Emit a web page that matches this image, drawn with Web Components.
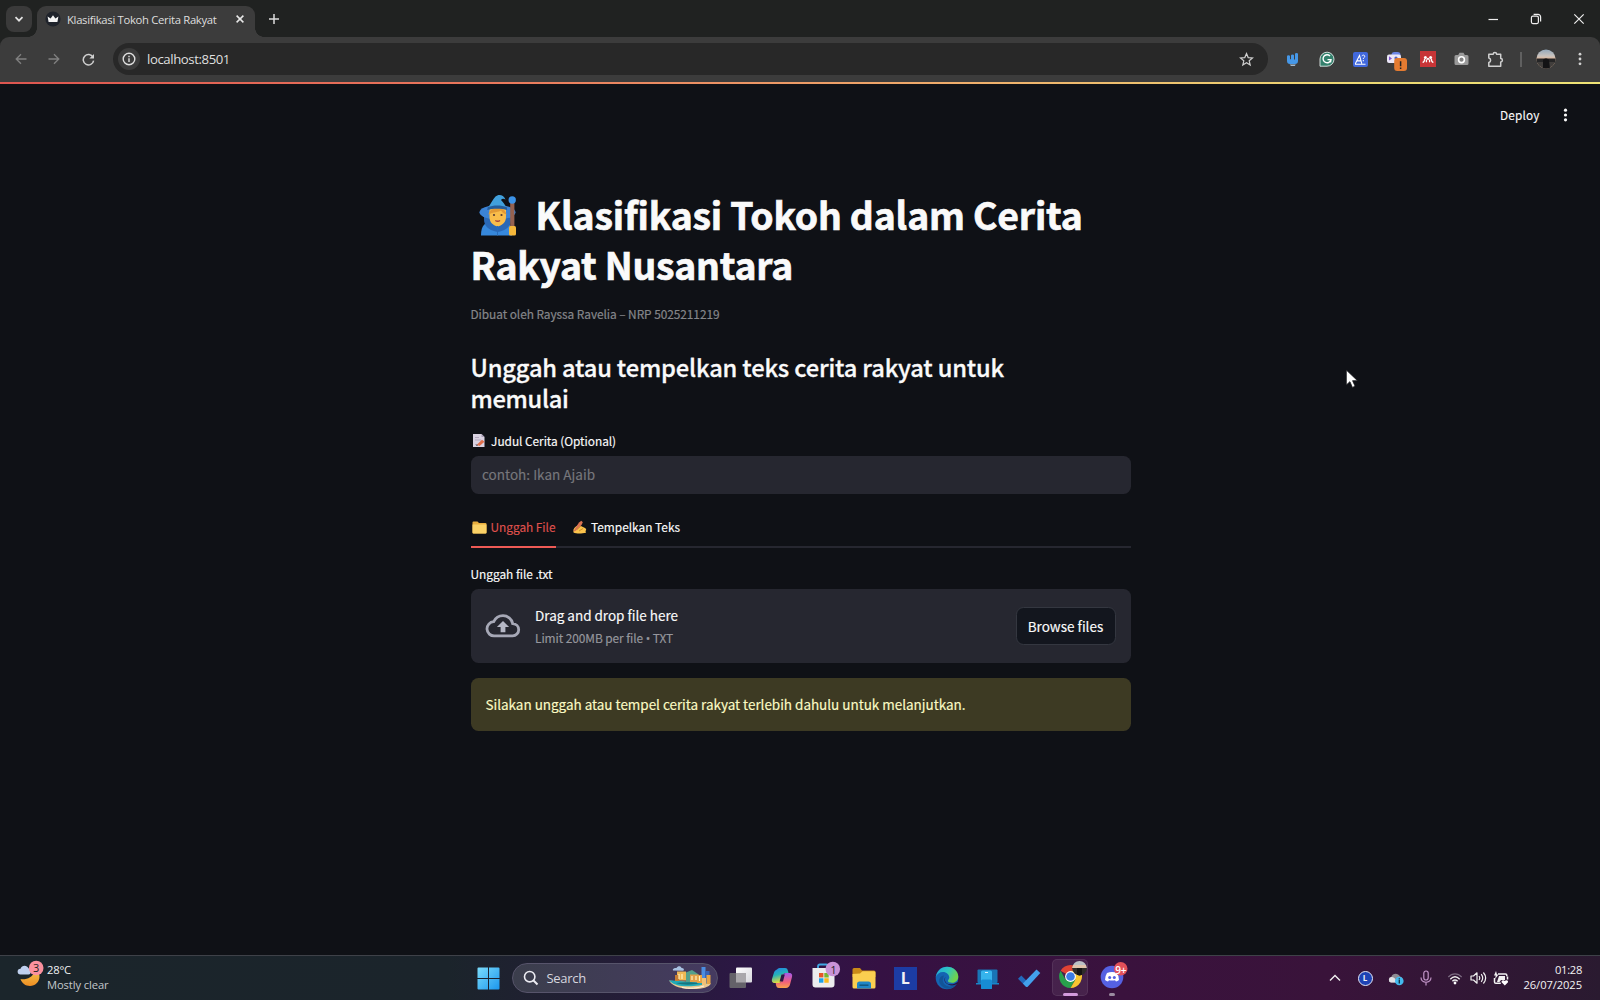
<!DOCTYPE html>
<html lang="id">
<head>
<meta charset="utf-8">
<title>Klasifikasi Tokoh Cerita Rakyat</title>
<style>
html,body{margin:0;height:100%;background:#0f1116;overflow:hidden}
</style>
</head>
<body>
<desktop-screen></desktop-screen>
<script>
const SANS = '"Noto Sans CJK SC","Open Sans",sans-serif';
const UI = '"Open Sans","Noto Sans",sans-serif';

/* name: [width, height, viewBox, markup] */
const ICONS = {
  chevDown:[12,12,'0 0 12 12','<path d="M2.5 4.2 6 7.7 9.5 4.2" fill="none" stroke="#e3e3e3" stroke-width="1.7"/>'],
  crown:[16,16,'0 0 16 16','<circle cx="8" cy="8" r="7.6" fill="#1f232b"/><path d="M2.6 5.4 5.6 7.4 8 4.2l2.4 3.2 3-2-1 5.6H3.6z" fill="#f4f4f4"/>'],
  x:[10,10,'0 0 10 10','<path d="M1.6 1.6l6.8 6.8M8.4 1.6 1.6 8.4" stroke="#e8e8e8" stroke-width="1.5"/>'],
  plus:[12,12,'0 0 12 12','<path d="M6 1v10M1 6h10" stroke="#dcdcdc" stroke-width="1.5"/>'],
  min:[12,12,'0 0 12 12','<path d="M1.5 6.5h9.5" stroke="#eee" stroke-width="1.2"/>'],
  restore:[12,12,'0 0 12 12','<rect x="1.4" y="3.2" width="7" height="7.4" rx="1.5" fill="none" stroke="#eee" stroke-width="1.2"/><path d="M3.6 1.4h4.4a2.6 2.6 0 0 1 2.6 2.6v4.6" fill="none" stroke="#eee" stroke-width="1.2"/>'],
  close:[12,12,'0 0 12 12','<path d="M1.3 1.3l9.4 9.4M10.7 1.3 1.3 10.7" stroke="#eee" stroke-width="1.2"/>'],
  back:[12,12,'0 0 12 12','<path d="M11.5 6H1.3M6 1.2 1.2 6 6 10.8" fill="none" stroke="#808080" stroke-width="1.3"/>'],
  fwd:[12,12,'0 0 12 12','<path d="M.5 6h10.2M6 1.2 10.8 6 6 10.8" fill="none" stroke="#808080" stroke-width="1.3"/>'],
  reload:[13,13,'0 0 13 13','<path d="M11 4.2A5.2 5.2 0 1 0 11.6 7.6" fill="none" stroke="#d0d0d0" stroke-width="1.5"/><path d="M12 .9v4.6H7.4z" fill="#d0d0d0"/>'],
  info:[14,14,'0 0 14 14','<circle cx="7" cy="7" r="5.8" fill="none" stroke="#dedede" stroke-width="1.4"/><path d="M7 6.2v3.9M7 3.8v1.4" stroke="#dedede" stroke-width="1.4"/>'],
  star:[15,15,'0 0 15 15','<path d="M7.5 1.6 9.2 5.6l4.3.4-3.3 2.8 1 4.2-3.7-2.2L3.8 13l1-4.2L1.5 6l4.3-.4z" fill="none" stroke="#cfcfcf" stroke-width="1.2"/>'],
  hand:[14,15,'0 0 14 15','<path d="M1 4.2q0-1 1.500-1t1.500 1v3h1V3.500q0-1 1.500-1t1.500 1v3.900h1V2q0-1 1.500-1t1.500 1v7q0 3-3 3H4q-3 0-3-3z" fill="#4698e8"/><path d="M3.600 12.600h6.200l-1 1.400H5z" fill="#a5bacd"/>'],
  grammarly:[16,16,'0 0 16 16','<path d="M1 15.2V8A7 7 0 1 1 8 15.2z" fill="#33806c" stroke="#dfe9e6" stroke-width=".9"/><path d="M11 5A4 4 0 1 0 12 8.6H8.5M12 8.4l-.5 3" fill="none" stroke="#fff" stroke-width="1.4"/>'],
  aq:[15,15,'0 0 15 15','<rect width="15" height="15" rx="2" fill="#4168dc"/><path d="M2.3 11.7 6.5 3.4l2.3 8.3M4 8.9h4.3M2 12.2h10.5" fill="none" stroke="#fff" stroke-width="1.1"/><path d="M9 4.2c.3-1.7 3-1.3 2.7.4-.2.9-1.4 1-1.4 2.4M10.3 8v1.3" fill="none" stroke="#fff"/>'],
  robot:[22,22,'0 0 22 22','<rect x="5.5" y="2" width="9" height="6" rx="3" fill="#6c86e6"/><rect x="1" y="4.5" width="14" height="8.5" rx="2" fill="#ebe7f7"/><path d="M3 6.3 6 8.4 3 10.5z" fill="#8157d2"/><circle cx="10" cy="8" r="1.6" fill="#5162bf"/><rect x="8.2" y="8" width="12.8" height="13" rx="3" fill="#e47b31"/><path d="M14.6 11.2v5M14.6 17.4v1.6" stroke="#222" stroke-width="1.5"/>'],
  mendeley:[16,16,'0 0 16 16','<rect width="16" height="16" fill="#c73537"/><g fill="none" stroke="#fff" stroke-width="1.300"><path d="M2.600 11.400c1.600-.2 2-1.600 2-3.400M13.400 11.400c-1.600-.2-2-1.600-2-3.400M6.300 11.200c.3-.8.3-1.600 0-2.700M9.700 11.200c-.3-.8-.3-1.600 0-2.700"/></g><g fill="#fff"><circle cx="5.400" cy="6.400" r="1.500"/><circle cx="10.600" cy="6.400" r="1.500"/><circle cx="8" cy="7.900" r="1.100"/></g>'],
  camera:[15,14,'0 0 15 14','<path d="M2 3h2.2L5.5.8h4L10.8 3H13a1.5 1.5 0 0 1 1.5 1.5v7A1.5 1.5 0 0 1 13 13H2A1.5 1.5 0 0 1 .5 11.500V4.500A1.500 1.500 0 0 1 2 3z" fill="#9a9a9a"/><circle cx="7.500" cy="7.700" r="2.900" fill="#808080" stroke="#fff" stroke-width="1.600"/>'],
  puzzle:[17,17,'0 0 17 17','<path d="M1.800 3.200h4.400a1.700 1.700 0 0 1 3.400 0h4.100v4.300a1.700 1.700 0 0 1 0 3.400v4.300H1.800v-3.700a2.300 2.300 0 0 0 0-4.500z" fill="none" stroke="#d0d0d0" stroke-width="1.500" stroke-linejoin="round"/>'],
  avatar:[20,20,'0 0 20 20','<defs><clipPath id="c"><circle cx="10" cy="10" r="9.600"/></clipPath><linearGradient id="s" x2="0" y2="1"><stop offset="0" stop-color="#8fa6bb"/><stop offset=".35" stop-color="#c9c3be"/><stop offset=".5" stop-color="#e0b79a"/></linearGradient></defs><g clip-path="url(#c)"><rect width="20" height="20" fill="url(#s)"/><path d="M0 9.500h20V14H0z" fill="#252526"/><path d="M0 13h20v7H0z" fill="#413e3c"/><path d="M7 11c1-2 5-2 6 0l1 9H7z" fill="#131315"/></g>'],
  dots:[4,16,'0 0 4 16','<g fill="#d2d2d2"><circle cx="2" cy="3.200" r="1.400"/><circle cx="2" cy="8" r="1.400"/><circle cx="2" cy="12.800" r="1.400"/></g>'],
  dotsApp:[5,16,'0 0 5 16','<g fill="#fafafa"><circle cx="2.500" cy="3.200" r="1.600"/><circle cx="2.500" cy="8" r="1.600"/><circle cx="2.500" cy="12.800" r="1.600"/></g>'],
  mage:[39,42,'0 0 39 42','<path d="M2 41.500C2 31 6 27 18.500 27S33 31 33 41.500z" fill="#3688dc"/><path d="M5 17h27v8c0 6-3 11-13.500 13C8 36 5 31 5 25z" fill="#2a68b6"/><ellipse cx="18.500" cy="18.300" rx="18" ry="7.200" fill="#3b83d6"/><path d="M10.500 15.500c2-3 14-3 16.500 0V23c0 5-3.500 8.500-8.300 9.500-5-1-8.200-4.500-8.200-9.500z" fill="#f9bd4b"/><path d="M9.500 20.500c1-5 5-6.500 9-6.500s8 1.500 9 6.500c-3-1-4.500-2-5.500-4-2 1.500-8 1.500-12.500 4z" fill="#e39a35"/><circle cx="15" cy="21" r="1.100" fill="#563b33"/><circle cx="22.500" cy="21" r="1.100" fill="#563b33"/><path d="M16.300 26.500q2.400 1.500 4.800 0" stroke="#a5403a" fill="none" stroke-width="1.300"/><path d="M9 14C12 9 14 5.500 16.500 2.500c2.500-2.500 8-2.500 10 3-2-1.200-3.500-1-4.500.5 2 2 4.500 5 5.500 8.500-5-2.200-13-2.200-18.500-.5z" fill="#41a0dc"/><path d="M8.800 13.200c5.500-2.300 13.500-2.300 19 0l.4 2.800c-6-1.800-14-1.800-20 0z" fill="#245d9b"/><path d="M18.500 32v9.500" stroke="#286cbb" stroke-width="1"/><rect x="31.200" y="8" width="4.200" height="26" fill="#95614f"/><circle cx="33.200" cy="6" r="3.700" fill="#3c93e8"/><rect x="30" y="32" width="7" height="9.500" rx="1.500" fill="#f5b73a"/>'],
  memo:[14,15,'0 0 14 15','<path d="M1 1h8.500l3 3v10H1z" fill="#d9d2e1"/><path d="M9.500 1v3h3z" fill="#a69bb3"/><path d="M3 4.500h4M3 7h6M3 11.500h5" stroke="#b3a8bf"/><path d="M4.800 11.800 10 6.700l2.500 2.100-5 4.200z" fill="#e0704c"/><path d="M4 13l.8-1.700 1.300 1.200z" fill="#444"/>'],
  folder:[15,13,'0 0 15 13','<path d="M.5 1.500A1 1 0 0 1 1.500.5h4L7 2h6.500a1 1 0 0 1 1 1v8.500a1 1 0 0 1-1 1h-12a1 1 0 0 1-1-1z" fill="#e8ae3e"/><path d="M.5 3.600h14v8a1 1 0 0 1-1 1h-12a1 1 0 0 1-1-1z" fill="#fbd267"/>'],
  write:[15,14,'0 0 15 14','<path d="M1.500 9.500C3 6.500 6 4.500 8 5.500l5 2.500c1.500.8 1.500 2 .5 3l.5 1.800-5 .6c-3 .2-6-.2-7.500-1z" fill="#fbc34c"/><path d="M1.200 11.500 7 2.500 9.300.7l1.500 1.500L9.500 5 3.500 11z" fill="#d97352"/><path d="M5 9.500l4-3.500M7 11l4-2.500" stroke="#c98c27" stroke-width=".9"/>'],
  cloudUp:[36,26,'0 0 36 26','<path d="M9.500 22.900a7.100 7.100 0 0 1-.8-14.200C10.500 5 14 2.700 18 2.700c4.700 0 8.700 3.300 9.700 7.900 3.400.2 6 2.900 6 6.100 0 3.400-2.700 6.200-6.100 6.200z" fill="none" stroke="#a6a8b6" stroke-width="2.800"/><path d="M15.600 19.300v-5.300h-3.700L18 8l6.100 6h-3.700v5.300z" fill="#b6b8c6"/>'],
  cursor:[15,20,'0 0 15 20','<path d="M1.300 1v15l3.600-3.300 2.500 5.700 2.700-1.200-2.500-5.500h4.900z" fill="#fff" stroke="#15171b" stroke-width=".8"/>'],
  weather:[28,28,'0 0 28 28','<defs><linearGradient id="m" x2="0" y2="1"><stop offset="0" stop-color="#f2c24b"/><stop offset="1" stop-color="#ef8d22"/></linearGradient></defs><path d="M3.500 19c5 1 12.500-1 14-8 2 0 5 1.500 5 5.500 0 5.500-4.500 9.500-9.500 9.500-4.500 0-8.300-2.800-9.500-7z" fill="url(#m)"/><path d="M3.500 14.500a2.900 2.900 0 0 1 0-5.800C4.500 5 10 4.500 11.500 8.300c3 .4 3.500 6.200 0 6.200z" fill="#bfd0ef"/><circle cx="19.200" cy="8" r="7.300" fill="#fb919e"/>'],
  win:[23,23,'0 0 23 23','<defs><linearGradient id="w" x2="1" y2="1"><stop offset="0" stop-color="#7bdcfb"/><stop offset="1" stop-color="#1b96ee"/></linearGradient></defs><path d="M1.500.5H11V11H.5V1.500a1 1 0 0 1 1-1zM12 .5h9.500a1 1 0 0 1 1 1V11H12zM.5 12H11v10.500H1.500a1 1 0 0 1-1-1zM12 12h10.500v9.500a1 1 0 0 1-1 1H12z" fill="url(#w)"/>'],
  search:[16,16,'0 0 16 16','<circle cx="6.700" cy="6.700" r="5.200" fill="none" stroke="#ececf2" stroke-width="1.600"/><path d="M10.500 10.500l4 4" stroke="#ececf2" stroke-width="1.900"/>'],
  city:[44,24,'0 0 44 24','<path d="M1 14.500c6 1 13 .5 20 1.500l22 1.500c-2 4-10 6-21 5.500C9 22.500 4 19 1 14.500z" fill="#e8c891"/><path d="M1 14.500c8-.5 15 1 20 1.500 8 .8 13 0 19 1.500-6 2-17 3.500-26 2.500-7-.8-10-3-13-5.500z" fill="#21aab6"/><path d="M8 17c8-1 17-1.500 23 .5-7 1.500-16 1.800-23-.5z" fill="#16757e"/><rect x="9" y="5.500" width="9" height="9" fill="#efb854"/><rect x="7" y="9" width="4" height="6" fill="#c67d34"/><path d="M18 6.500 24 4l6 4v8H18z" fill="#54a08b"/><rect x="22" y="8.500" width="9" height="7.500" fill="#e2a049"/><rect x="33.500" y="1" width="4" height="15" fill="#4b8de1"/><rect x="37" y="5" width="4.500" height="12" fill="#3664b9"/><path d="M29 9h5v8h-5zM38.500 9h4v9h-4z" fill="#e6a345"/><path d="M34 12h4v7h-4z" fill="#f0c277"/><path d="M11 8v5M14 8v5M24 10v4M28 10v4M31.500 10v5" stroke="#fff1bd" stroke-width="1.200"/><path d="M5 4.500C4 2.500 7 1.800 8.500 2 9.500-.3 13-.3 13.500 2c3-.3 3 2.800 1 2.800z" fill="#a9c2e2"/><path d="M14 21.500c7 1.500 16 .8 22-1.500" stroke="#fff2dc" fill="none"/>'],
  taskview:[24,24,'0 0 24 24','<defs><linearGradient id="v" x2="1" y2="1"><stop offset="0" stop-color="#fff"/><stop offset="1" stop-color="#d6d6dc"/></linearGradient></defs><rect x="7" y="1.500" width="16" height="15" rx="1" fill="url(#v)"/><rect x=".5" y="7" width="16.500" height="15" rx="1" fill="#646269"/><path d="M7 7h10v9.500H7z" fill="#a9a7ab"/>'],
  copilot:[22,22,'0 0 22 22','<defs><linearGradient id="p" x2=".3" y2="1"><stop offset="0" stop-color="#2381ea"/><stop offset=".5" stop-color="#25b2b8"/><stop offset="1" stop-color="#e5dc3c"/></linearGradient><linearGradient id="q" x2="0" y2="1"><stop offset="0" stop-color="#a458ec"/><stop offset=".6" stop-color="#f2617a"/><stop offset="1" stop-color="#f8a44a"/></linearGradient></defs><path d="M6 2.500C7 1 8 1 10 1h4c2 0 2.500 1 3 3l.5 2H15c-2 0-2.700 1-3 2.500l-1.500 5C10 15.500 9 16 7.500 16H4C1 16 .5 14 1 12l2-6.500C3.500 4 4.500 3 6 2.500z" fill="url(#p)"/><path d="M16 6h2c3 0 3.500 2 3 4l-2 7.500c-.6 2-2 3.500-4 3.500H8c-2 0-2.500-1-3-3l-.3-2H7.500c2 0 2.500-1 3-2.500l1.500-5C12.500 6.500 14 6 16 6z" fill="url(#q)"/><path d="M10.500 7.500h3.300L12 14.500H8.600z" fill="#2c1744"/>'],
  store:[30,30,'0 0 30 30','<path d="M7 8.500V5.500q0-2 2-2h6q2 0 2 2" fill="none" stroke="#41a8e4" stroke-width="1.800"/><path d="M1.500 7h22v16.500a3 3 0 0 1-3 3h-16a3 3 0 0 1-3-3z" fill="#ececee"/><path d="M8 12h4.400v4.400H8z" fill="#e75528"/><path d="M13.300 12h4.400v4.400h-4.400z" fill="#79b62f"/><path d="M8 17.300h4.400v4.400H8z" fill="#1ca1e8"/><path d="M13.300 17.300h4.400v4.400h-4.400z" fill="#f9b91c"/><circle cx="21.800" cy="8" r="7.300" fill="#c993d7"/>'],
  explorer:[24,24,'0 0 24 24','<path d="M.5 3.500a1.500 1.500 0 0 1 1.500-1.500h6l2 2.500h12a1.500 1.500 0 0 1 1.500 1.500v5H.5z" fill="#c98a18"/><path d="M.5 8 8 7.500l2.500-2.300H22A1.500 1.500 0 0 1 23.500 7v14a1.500 1.500 0 0 1-1.500 1.500H2A1.500 1.500 0 0 1 .5 21z" fill="#fbcf50"/><path d="M5 22.500V18a2.500 2.500 0 0 1 2.500-2.500h9A2.500 2.500 0 0 1 19 18v4.500z" fill="#1e86c6"/><path d="M7.500 19.200h9" stroke="#10577f" stroke-width="1.500"/>'],
  edge:[24,24,'0 0 24 24','<defs><linearGradient id="e" x2="1" y2=".4"><stop offset="0" stop-color="#23a6de"/><stop offset=".55" stop-color="#2fc6c0"/><stop offset="1" stop-color="#70d34c"/></linearGradient></defs><circle cx="12" cy="12" r="11.300" fill="#1464b2"/><path d="M.8 11C2 4.500 6.500.7 12 .7c6.500 0 11.300 4.600 11.300 9.800 0 4-3 6.300-6.300 6.300-2.500 0-4.500-1-4-2.300.8-1.500 1.300-2 1.300-3C14.300 8.500 11.500 6 8 6 4.500 6 1.800 8 .8 11z" fill="url(#e)"/><path d="M8.200 12c-1.500 3.500 1 8 6 8.500 3 .3 5.500-.8 7.300-2.500C18 24 9 24.500 5 18c-2-3.500-.5-8 4-8.500 0 0-.5 1.300-.8 2.500z" fill="#125497"/><path d="M10.500 11c-1.500 3-.3 6.500 4.200 7.300 3 .3 5.700-.7 7.600-2.300l1 .8c-3 3-7 3.200-10 1.700C9.500 17 8.500 13.500 10.500 11z" fill="#2a1142"/>'],
  phone:[23,23,'0 0 23 23','<rect x="1.500" y="2.500" width="20" height="13.500" rx="1" fill="#1975b6"/><path d="M0 16h23v1.500H0z" fill="#1986c9"/><rect x="5" y="3.500" width="11" height="18.500" rx="1.500" fill="#36b4ed"/><rect x="5" y="12.500" width="11" height="9.500" rx="1.500" fill="#178cd4"/><path d="M9 5.500h3" stroke="#d7f1ff"/>'],
  todo:[24,20,'0 0 24 20','<path d="M1 10.700 4.300 7.500l8 7.900-3.300 3.300z" fill="#2269bb"/><path d="M9 18.700 5.900 15.500 19.500 1.500l3.800 3.600L10.700 18.700q-.8.800-1.700 0z" fill="#43a1ec"/>'],
  chrome:[30,30,'0 0 30 30','<path d="M12.500 16.500 2.600 10.800A11.500 11.500 0 0 1 22.500 10.800H12.500z" fill="#e04234"/><path d="M12.500 16.500l5 2.900-5 8.600A11.500 11.500 0 0 1 2.600 10.800l4.900 8.600z" fill="#28a04c"/><path d="M12.500 16.500V10.800H22.500A11.500 11.500 0 0 1 12.500 28l5-8.600z" fill="#f8c630"/><circle cx="12.500" cy="16.500" r="5.400" fill="#fff"/><circle cx="12.500" cy="16.500" r="4.300" fill="#3c7ce5"/><defs><clipPath id="k"><circle cx="21.500" cy="8.200" r="7.200"/></clipPath></defs><g clip-path="url(#k)"><path d="M14 0h15v8H14z" fill="#bbc0c5"/><path d="M14 5h15v3H14z" fill="#e1c4ac"/><path d="M14 8h15v8H14z" fill="#2f2c2a"/><path d="M19 8h5v8h-5z" fill="#151515"/></g>'],
  discord:[28,28,'0 0 28 28','<circle cx="12" cy="16" r="11.300" fill="#5561e2"/><path d="M7 12q5-2 10 0 2 3 2 7-1.500 1.300-3 1.500l-1-1.300q-3 .8-6 0L8 20.500Q6.500 20.300 5 19q0-4 2-7z" fill="#fff"/><circle cx="9.700" cy="16.400" r="1.500" fill="#5561e2"/><circle cx="14.300" cy="16.400" r="1.500" fill="#5561e2"/><circle cx="20.700" cy="7.800" r="6.800" fill="#e25059"/>'],
  up:[12,8,'0 0 12 8','<path d="M1 6.500l5-5 5 5" fill="none" stroke="#f0f0f0" stroke-width="1.400"/>'],
  onedrive:[16,15,'0 0 16 15','<path d="M3 11.500a2.800 2.800 0 0 1 .3-5.500C4.500 2 10 1.500 12 5.500c3.500.5 4 6 0 6z" fill="#8f8c94"/><path d="M3 11.500a2.800 2.800 0 0 1 .3-5.500c2 0 4 1 6 5.500z" fill="#e1e0e4"/><circle cx="11.300" cy="10" r="4.300" fill="#43b9ee"/><path d="M11.300 9v3.500M11.300 7.200v1.200" stroke="#13303e" stroke-width="1.300"/>'],
  mic:[12,16,'0 0 12 16','<rect x="3.800" y="1" width="4.400" height="9" rx="2.200" fill="none" stroke="#c194c8" stroke-width="1.200"/><path d="M1 7.500c0 6.300 10 6.300 10 0M6 12.300V15.500" fill="none" stroke="#c194c8" stroke-width="1.200"/>'],
  wifi:[16,13,'0 0 16 13','<path d="M1.300 5c4-4.300 9.400-4.300 13.400 0" fill="none" stroke="#7b6a80" stroke-width="1.200"/><path d="M3.300 7.200c3-3 6.400-3 9.400 0M5.400 9.200c2-1.900 3.200-1.900 5.200 0" fill="none" stroke="#f2f2f2" stroke-width="1.400"/><circle cx="8" cy="11" r="1.400" fill="#fff"/>'],
  sound:[17,14,'0 0 17 14','<path d="M1 5h2.500L7 1.800v10.400L3.500 9H1z" fill="none" stroke="#f2f2f2" stroke-width="1.200" stroke-linejoin="round"/><path d="M9 5q1.500 2 0 4M11.200 3.200q3 3.800 0 7.600M13.400 1.500q4.500 5.500 0 11" fill="none" stroke="#f2f2f2" stroke-width="1.200"/>'],
  battery:[16,15,'0 0 16 15','<path d="M5 3h7.500q1.300 0 1.300 1.300v1M1.500 7v4q0 1.300 1.300 1.300h5" fill="none" stroke="#f2f2f2" stroke-width="1.500"/><path d="M3 0 1 4.500h1.700L2.200 8 5.500 3.500H4z" fill="#f2f2f2"/><path d="M6 5h6v4H8l-1.500 2H4z" fill="#f2f2f2"/><path d="M14.500 5.500v3" stroke="#f2f2f2" stroke-width="1.500"/><path d="M11.800 14.500 8.600 11.300c-.5-2 2-3 3.200-1.200 1.200-1.800 3.700-.8 3.200 1.200z" fill="#fff"/>']
};

const define = (name, css, html) => customElements.define(name, class extends HTMLElement {
  connectedCallback() {
    if (this.shadowRoot) return;
    this.attachShadow({mode:'open'}).innerHTML =
      `<style>*{box-sizing:border-box}:host{display:block;box-sizing:border-box}${css}</style>${html}`;
  }
});

customElements.define('ui-icon', class extends HTMLElement {
  connectedCallback() {
    if (this.shadowRoot) return;
    const [w, h, vb, body] = ICONS[this.getAttribute('name')];
    this.attachShadow({mode:'open'}).innerHTML =
      `<style>:host{display:block;flex:none;width:${w}px;height:${h}px}svg{display:block}</style><svg width="${w}" height="${h}" viewBox="${vb}">${body}</svg>`;
  }
});

/* One line of text tracked to a fixed measure: width, size, line height, weight, extra stroke */
customElements.define('text-line', class extends HTMLElement {
  connectedCallback() {
    if (this.shadowRoot) return;
    const a = (n, d) => this.getAttribute(n) || d;
    const root = this.attachShadow({mode:'open'});
    root.innerHTML = `<style>:host{display:block;flex:none;white-space:nowrap;width:${a('w')}px;height:${a('lh')}px;line-height:${a('lh')}px;font-size:${a('fs')}px;font-weight:${a('wt','400')};-webkit-text-stroke:${a('st','0')}px currentColor}span{display:inline-block}i{font:normal 1em/1 "Open Sans",sans-serif}</style><span></span>`;
    const s = root.querySelector('span');
    /* CJK bullets are full width, so the bullet takes the Latin face */
    s.innerHTML = a('t').replace('•', '<i>•</i>');
    const n = [...s.textContent].length;
    s.style.letterSpacing = ((+a('w') - s.getBoundingClientRect().width) / n).toFixed(4) + 'px';
  }
});

define('tab-strip', `:host{display:flex;height:37px;background:#202221;padding-left:6px;font-family:${UI};color:#dedede;align-items:flex-start}
.pick{width:26px;height:26px;margin:6px 5px 0 0;border-radius:8px;background:#3a3a3a;display:grid;place-items:center}
.tab{width:218px;height:31px;margin-top:6px;border-radius:9px 9px 0 0;background:#3c3c3c;display:flex;align-items:center;padding:0 10px 5px 7.500px;position:relative}
.tab:before,.tab:after{content:"";position:absolute;bottom:0;width:9px;height:9px}
.tab:before{left:-9px;background:radial-gradient(circle at 0 0,transparent 8.600px,#3c3c3c 9px)}
.tab:after{right:-9px;background:radial-gradient(circle at 100% 0,transparent 8.600px,#3c3c3c 9px)}
text-line{margin:1px 0 0 6.500px}.x{margin-left:auto}
.plus{margin:12.500px 0 0 12.500px}
.win{margin:12.500px 15.500px 0 auto;display:flex;gap:31px}`,
`<div class="pick"><ui-icon name="chevDown"></ui-icon></div>
<div class="tab"><ui-icon name="crown"></ui-icon><text-line t="Klasifikasi Tokoh Cerita Rakyat" w="149.500" fs="11.300" lh="19"></text-line><ui-icon class="x" name="x"></ui-icon></div>
<ui-icon class="plus" name="plus"></ui-icon>
<div class="win"><ui-icon name="min"></ui-icon><ui-icon name="restore"></ui-icon><ui-icon name="close"></ui-icon></div>`);

define('tool-bar', `:host{background:#202221}
.bar{height:45px;background:#3c3c3c;border-radius:9px 9px 0 0;display:flex;align-items:center;padding:0 18px 1px 15px;font-family:${UI}}
.nav{display:flex;gap:21px;width:98px;align-items:center}
.url{width:1155px;flex:none;height:32px;border-radius:16px;background:#282828;display:flex;align-items:center;padding:0 14.500px 0 4.500px;color:#dfdfdf}
.chip{width:22px;height:22px;border-radius:50%;background:#3c3c3c;display:grid;place-items:center;margin-right:7.500px}
.star{margin-left:auto}
.ext{display:flex;flex:1;align-items:center}
.sep{width:2px;height:15px;background:#606060}
.line{height:2px;background:linear-gradient(90deg,#dd5650,#e9775c 30%,#efae6c 60%,#ecd873 85%,#eee376)}`,
`<div class="bar"><div class="nav"><ui-icon name="back"></ui-icon><ui-icon name="fwd"></ui-icon><ui-icon name="reload" style="margin-left:.5px"></ui-icon></div>
<div class="url"><div class="chip"><ui-icon name="info"></ui-icon></div><text-line t="localhost:8501" w="83" fs="13.200" lh="22"></text-line><ui-icon class="star" name="star"></ui-icon></div>
<div class="ext"><ui-icon name="hand" style="margin-left:18px"></ui-icon><ui-icon name="grammarly" style="margin-left:18.500px"></ui-icon><ui-icon name="aq" style="margin-left:18px"></ui-icon><ui-icon name="robot" style="margin:4px 0 0 18px"></ui-icon><ui-icon name="mendeley" style="margin-left:12px"></ui-icon><ui-icon name="camera" style="margin-left:18px"></ui-icon><ui-icon name="puzzle" style="margin-left:18.500px"></ui-icon><div class="sep" style="margin-left:15.500px"></div><ui-icon name="avatar" style="margin-left:auto;margin-right:22.500px"></ui-icon><ui-icon name="dots"></ui-icon></div></div>
<div class="line"></div>`);

define('app-header', `:host{height:63px;display:flex;justify-content:flex-end;align-items:center;padding:0 32.500px 2px 0;gap:23px;color:#fafafa}`,
`<text-line t="Deploy" w="39.500" fs="11.800" lh="20" st=".1"></text-line><ui-icon name="dotsApp" style="margin-top:1px"></ui-icon>`);

define('page-title', `:host{height:100px;color:#fafafa}.r{display:flex;align-items:center}ui-icon{margin:0 17.500px 0 8.600px}`,
`<div class="r"><ui-icon name="mage"></ui-icon><text-line t="Klasifikasi Tokoh dalam Cerita" w="547" fs="37.300" lh="49.500" wt="700" st=".7"></text-line></div><text-line t="Rakyat Nusantara" w="322.500" fs="37.300" lh="49.500" wt="700" st=".7"></text-line>`);

define('text-field', `label{display:flex;align-items:center;height:20px;color:#fafafa;gap:5px;padding-left:1.600px}.f{margin-top:5px;height:38px;border-radius:7.500px;background:#262730;color:#77777c;padding:8px 11.500px}`,
`<label><ui-icon name="memo"></ui-icon><text-line t="Judul Cerita (Optional)" w="125" fs="11.900" lh="20" st=".15"></text-line></label><div class="f"><text-line t="contoh: Ikan Ajaib" w="113" fs="13.500" lh="20" st=".15"></text-line></div>`);

define('tab-list', `:host{display:flex;height:38px;box-shadow:inset 0 -2px #262730;gap:15.500px;color:#fafafa}
div{display:flex;height:38px;padding:0 0 3px 1px;gap:4px;align-items:center}.on{color:#e0524e;box-shadow:inset 0 -2px #ee5a55}`,
`<div class="on"><ui-icon name="folder"></ui-icon><text-line t="Unggah File" w="65" fs="11.900" lh="20" st=".1"></text-line></div><div><ui-icon name="write"></ui-icon><text-line t="Tempelkan Teks" w="89" fs="11.900" lh="20" st=".15"></text-line></div>`);

define('file-uploader', `:host{color:#fafafa}.z{height:74px;margin-top:5.300px;border-radius:7.500px;background:#262730;display:flex;align-items:center;padding:0 15px 0 14.500px}
.t{margin-left:14px}.t text-line+text-line{color:#96979d;margin-top:2.500px}
button{all:unset;box-sizing:border-box;margin-left:auto;width:100px;height:38px;border:1px solid #343740;border-radius:7.500px;background:#13161e;display:grid;place-items:center;padding-bottom:1px}`,
`<text-line t="Unggah file .txt" w="82" fs="11.900" lh="20" st=".15"></text-line><div class="z"><ui-icon name="cloudUp"></ui-icon><div class="t"><text-line t="Drag and drop file here" w="143" fs="13.500" lh="22" st=".15"></text-line><text-line t="Limit 200MB per file • TXT" w="138" fs="11.900" lh="20" st=".15"></text-line></div><button><text-line t="Browse files" w="75.500" fs="13.500" lh="22" st=".15"></text-line></button></div>`);

define('alert-box', `:host{height:53px;border-radius:7.500px;background:#3d3a23;color:#fbfac4;padding:15.500px 15px}`,
`<text-line t="Silakan unggah atau tempel cerita rakyat terlebih dahulu untuk melanjutkan." w="480" fs="13.500" lh="22" st=".15"></text-line>`);

define('story-app', `:host{flex:1;background:#0f1116;font-family:${SANS};overflow:hidden}
main{width:660px;margin:43.300px 0 0 470.500px}
.c{color:#85868a;margin-top:14.200px}.h{color:#fafafa;margin-top:27.700px}`,
`<app-header></app-header><main><page-title></page-title>
<text-line class="c" t="Dibuat oleh Rayssa Ravelia – NRP 5025211219" w="249" fs="11.900" lh="20" st=".2"></text-line>
<div class="h"><text-line t="Unggah atau tempelkan teks cerita rakyat untuk" w="533.500" fs="23.700" lh="31.300" wt="500" st=".3"></text-line><text-line t="memulai" w="98" fs="23.700" lh="31.300" wt="500" st=".3"></text-line></div>
<text-field style="margin-top:16px"></text-field>
<tab-list style="margin-top:16px"></tab-list>
<file-uploader style="margin-top:16px"></file-uploader>
<alert-box style="margin-top:14.900px"></alert-box></main>`);

define('task-bar', `:host{height:45px;border-top:1px solid #3e4148;background:linear-gradient(90deg,#1b252b 0,#1b242b 28%,#231d36 38%,#2d1646 48%,#351143 55%,#3a123d 70%,#39133a 83%,#2a1a30 100%);display:flex;font-family:${UI};color:#f2f2f4;position:relative}
.weather{width:470.500px;padding:2px 0 0 17px;display:flex;gap:2px;position:relative}
.weather ui-icon{margin-top:2px}
.wt text-line+text-line{color:#c4c8cc}
.badge{position:absolute;color:#222;text-align:center}
.cell{width:41.200px;height:44px;display:grid;place-items:center;position:relative;flex:none}
.search{width:206px;height:30px;margin:7px 2px 0 5.500px;border-radius:15px;border:1px solid #57546b;background:linear-gradient(90deg,#3b3e4c,#453a60);display:flex;align-items:center;padding:0 5px 1px 9.500px;gap:8px;color:#d6d6df;flex:none}
.search ui-icon:last-child{margin-left:auto}
.active{position:absolute;left:2.500px;top:3px;width:36px;height:37px;border-radius:5px;background:#ffffff12;border:1px solid #ffffff14}
.pill{position:absolute;top:37px;height:3px;border-radius:2px}
.tray{margin-left:auto;display:flex;align-items:center;padding-right:18px}
.l{width:15px;height:15px;border-radius:50%;background:#1e43b4;border:1.300px solid #e5e8f7}
.clock{display:flex;flex-direction:column;align-items:flex-end;padding-bottom:2px}`,
`<div class="weather"><ui-icon name="weather"></ui-icon><text-line class="badge" style="left:33px;top:3.500px" t="3" w="6.500" fs="11" lh="16"></text-line><div class="wt" style="padding-top:4px"><text-line t="28°C" w="24" fs="11.200" lh="15"></text-line><text-line t="Mostly clear" w="61.500" fs="11.200" lh="15"></text-line></div></div>
<div class="cell" style="width:36px"><ui-icon name="win"></ui-icon></div>
<div class="search"><ui-icon name="search"></ui-icon><text-line t="Search" w="39.500" fs="13" lh="22"></text-line><ui-icon name="city"></ui-icon></div>
<div class="cell"><ui-icon name="taskview"></ui-icon></div>
<div class="cell"><ui-icon name="copilot"></ui-icon></div>
<div class="cell"><ui-icon name="store" style="margin:-5px 0 0 7px"></ui-icon><text-line class="badge" style="left:28px;top:6.500px" t="1" w="6" fs="10.500" lh="14"></text-line></div>
<div class="cell"><ui-icon name="explorer"></ui-icon></div>
<div class="cell"><div style="width:23px;height:23px;background:#1c3ca4;display:grid;place-items:center"><text-line t="L" w="9" fs="16" lh="22" wt="700"></text-line></div></div>
<div class="cell"><ui-icon name="edge"></ui-icon></div>
<div class="cell"><ui-icon name="phone"></ui-icon></div>
<div class="cell"><ui-icon name="todo"></ui-icon></div>
<div class="cell"><div class="active"></div><ui-icon name="chrome" style="margin:-7px 0 0 5.500px;position:relative"></ui-icon><div class="pill" style="left:13.500px;width:15px;background:#d49bdd"></div></div>
<div class="cell"><ui-icon name="discord" style="margin:-6px 0 0 5px"></ui-icon><text-line class="badge" style="left:24.500px;top:6.500px;color:#fff" t="9+" w="11" fs="10" lh="14" wt="600"></text-line><div class="pill" style="left:18px;width:6px;background:#9b8ca0"></div></div>
<div class="tray"><ui-icon name="up"></ui-icon><div class="l" style="margin-left:16.500px;display:grid;place-items:center"><text-line t="L" w="4.500" fs="8" lh="12" wt="700"></text-line></div><ui-icon name="onedrive" style="margin-left:15.500px"></ui-icon><ui-icon name="mic" style="margin-left:15.500px"></ui-icon><ui-icon name="wifi" style="margin-left:15.500px"></ui-icon><ui-icon name="sound" style="margin-left:6.500px"></ui-icon><ui-icon name="battery" style="margin-left:6px"></ui-icon>
<div class="clock" style="margin-left:15px"><text-line t="01:28" w="27" fs="11.200" lh="15"></text-line><text-line t="26/07/2025" w="58.500" fs="11.200" lh="15"></text-line></div></div>`);

define('desktop-screen', `:host{width:1600px;height:1000px;display:flex;flex-direction:column;position:relative;overflow:hidden}.p{position:absolute;left:1344.500px;top:369px}`,
`<tab-strip></tab-strip><tool-bar></tool-bar><story-app></story-app><task-bar></task-bar><ui-icon class="p" name="cursor"></ui-icon>`);
</script>
</body>
</html>
